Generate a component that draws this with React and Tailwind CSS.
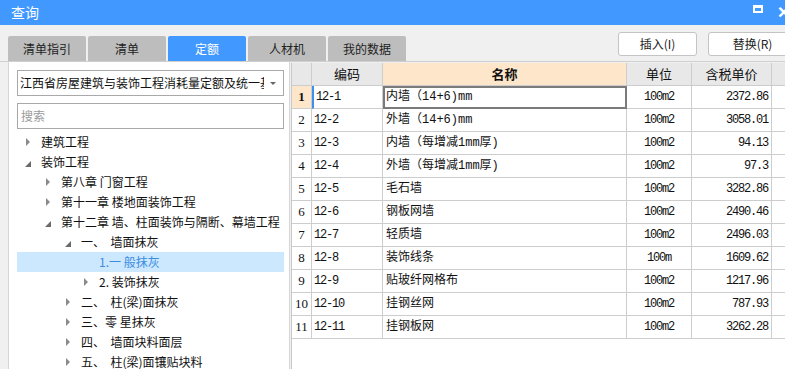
import React from 'react';

const CJK = { fontFamily: '"Noto Sans CJK SC", "Noto Sans", sans-serif' };
const GRID = { fontFamily: '"Liberation Mono", "Noto Sans CJK SC", monospace' };

const tabs = ['清单指引', '清单', '定额', '人材机', '我的数据'];

const tree = [
  [0, 'closed', '建筑工程'],
  [0, 'open', '装饰工程'],
  [1, 'closed', '第八章 门窗工程'],
  [1, 'closed', '第十一章 楼地面装饰工程'],
  [1, 'open', '第十二章 墙、柱面装饰与隔断、幕墙工程'],
  [2, 'open', '一、  墙面抹灰'],
  [3, null, '1.一 般抹灰', true],
  [3, 'closed', '2. 装饰抹灰'],
  [2, 'closed', '二、  柱(梁)面抹灰'],
  [2, 'closed', '三、零 星抹灰'],
  [2, 'closed', '四、  墙面块料面层'],
  [2, 'closed', '五、  柱(梁)面镶贴块料'],
];

const rows = [
  ['12-1', '内墙（14+6)mm', '100m2', '2372.86'],
  ['12-2', '外墙（14+6)mm', '100m2', '3058.01'],
  ['12-3', '内墙（每增减1mm厚)', '100m2', '94.13'],
  ['12-4', '外墙（每增减1mm厚)', '100m2', '97.3'],
  ['12-5', '毛石墙', '100m2', '3282.86'],
  ['12-6', '钢板网墙', '100m2', '2490.46'],
  ['12-7', '轻质墙', '100m2', '2496.03'],
  ['12-8', '装饰线条', '100m', '1609.62'],
  ['12-9', '贴玻纤网格布', '100m2', '1217.96'],
  ['12-10', '挂钢丝网', '100m2', '787.93'],
  ['12-11', '挂钢板网', '100m2', '3262.28'],
];

const indent = ['pl-[8px]', 'pl-[28px]', 'pl-[48px]', 'pl-[66px]'];

function Arrow({ state }) {
  if (state === 'closed')
    return (
      <svg width="15" height="20" viewBox="0 0 15 20">
        <path d="M1 6 L5 10 L1 14 Z" fill="#8a8a8a" />
      </svg>
    );
  if (state === 'open')
    return (
      <svg width="15" height="20" viewBox="0 0 15 20">
        <path d="M6 9 L6 15 L0 15 Z" fill="#6a6a6a" />
      </svg>
    );
  return <span className="w-[15px]" />;
}

export default function App() {
  return (
    <div className="w-[785px] h-[369px] overflow-hidden bg-[#f0f0f0] flex flex-col" style={CJK}>
      {/* title bar */}
      <div className="h-[25px] bg-[#4198ff] flex items-center pl-[11px] text-white text-[14px] relative">
        查询
        <div className="absolute left-[753px] top-[5px] w-[10px] h-[8px] border-2 border-t-[3px] border-white" />
        <span className="absolute left-[777px] top-[1px] text-white text-[16px] font-bold leading-[20px]">✕</span>
      </div>

      {/* toolbar */}
      <div className="h-[36px] flex pl-[8px]">
        <div className="flex gap-[2px] self-end">
          {tabs.map((t) => (
            <div
              key={t}
              className={`w-[78px] h-[25px] rounded-t-[2px] flex items-center justify-center text-[12px] ${
                t === '定额' ? 'bg-[#4198ff] text-white' : 'bg-[#bdbdbd] text-[#222]'
              }`}
            >
              {t}
            </div>
          ))}
        </div>
        <div className="ml-auto flex gap-[11px] mt-[7px] mr-[-12px]">
          <button className="w-[79px] h-[24px] bg-white border border-[#c4c4c4] rounded-[3px] text-[12px] text-[#222]">
            插入(I)
          </button>
          <button className="w-[89px] h-[24px] bg-white border border-[#c4c4c4] rounded-[3px] text-[12px] text-[#222]">
            替换(R)
          </button>
        </div>
      </div>

      {/* main */}
      <div className="flex flex-1 min-h-0 border-t border-[#cfcfcf]">
        {/* left panel */}
        <div className="ml-[8px] w-[282px] bg-white border-l border-r border-[#d6d6d6] pl-[8px] pr-[5px] pt-[8px]">
          <div className="h-[26px] border border-[#a9a9a9] flex items-center pl-[2px] pr-[4px] text-[12px] text-[#111]">
            <div className="flex-1 overflow-hidden whitespace-nowrap">江西省房屋建筑与装饰工程消耗量定额及统一基价表</div>
            <svg width="12" height="10" viewBox="0 0 12 10" className="ml-[3px]">
              <path d="M3 4 L9 4 L6 7 Z" fill="#666" />
            </svg>
          </div>
          <div className="h-[26px] mt-[7px] border border-[#a9a9a9] flex items-center pl-[3px] text-[12px] text-[#9a9a9a]">
            搜索
          </div>
          <div className="mt-[3px]">
            {tree.map(([lvl, st, text, sel]) => (
              <div
                key={text}
                className={`h-[20px] flex items-center text-[12px] whitespace-pre ${indent[lvl]} ${
                  sel ? 'bg-[#cce8ff] text-[#3b8de0]' : 'text-[#111]'
                }`}
              >
                <Arrow state={st} />
                <span className="ml-[1px]">{text}</span>
              </div>
            ))}
          </div>
        </div>

        {/* table */}
        <div className="flex-1 ml-[1px] mt-[1px] bg-white border-l border-[#c8c8c8] text-[12px] text-[#111]" style={GRID}>
          <div className="grid grid-cols-[20px_71px_244px_65px_80px_1fr]">
            <div className="h-[23px] bg-[#e8e8e8] border-r border-b border-[#cdcdcd]" />
            <div className="h-[23px] bg-[#e8e8e8] border-r border-b border-[#cdcdcd] flex items-center justify-center text-[13px]" style={CJK}>编码</div>
            <div className="h-[23px] bg-[#fde6c9] border-r border-b border-[#cdcdcd] flex items-center justify-center font-bold text-[13px]" style={CJK}>名称</div>
            <div className="h-[23px] bg-[#e8e8e8] border-r border-b border-[#cdcdcd] flex items-center justify-center text-[13px]" style={CJK}>单位</div>
            <div className="h-[23px] bg-[#e8e8e8] border-r border-b border-[#cdcdcd] flex items-center justify-center text-[13px]" style={CJK}>含税单价</div>
            <div className="h-[23px] bg-[#e8e8e8] border-b border-[#cdcdcd]" />
            {rows.map((r, i) => (
              <React.Fragment key={r[0]}>
                <div
                  className={`h-[23px] border-r border-b border-[#cdcdcd] flex items-center justify-center text-[13px] ${
                    i === 0 ? 'bg-[#fde6c9] font-bold' : ''
                  }`}
                  style={{ fontFamily: '"Liberation Serif", serif' }}
                >
                  {i + 1}
                </div>
                <div
                  className={`h-[23px] border-r border-b border-[#cdcdcd] flex items-center pl-[2px] tracking-[-1.2px] ${
                    i === 0 ? 'border-l-2 border-l-[#3d8ff0] pl-[1px]' : ''
                  }`}
                >
                  {r[0]}
                </div>
                <div
                  className={`h-[23px] border-r border-b border-[#cdcdcd] flex items-center pl-[3px] ${
                    i === 0 ? 'outline-2 outline-[#7b7b7b] -outline-offset-2' : ''
                  }`}
                >
                  {r[1]}
                </div>
                <div className="h-[23px] border-r border-b border-[#cdcdcd] flex items-center justify-center tracking-[-1.2px]">
                  {r[2]}
                </div>
                <div className="h-[23px] border-r border-b border-[#cdcdcd] flex items-center justify-end pr-[3px] tracking-[-1.2px]">
                  {r[3]}
                </div>
                <div className="h-[23px] border-b border-[#cdcdcd]" />
              </React.Fragment>
            ))}
          </div>
        </div>
      </div>
    </div>
  );
}
